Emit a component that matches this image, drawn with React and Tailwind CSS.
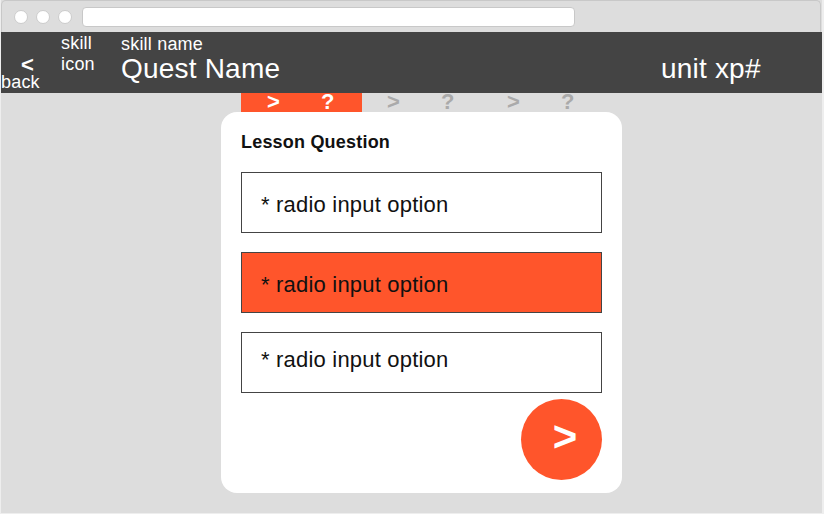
const tabs = [
  { id: 1, active: true },
  { id: 2, active: false },
  { id: 3, active: false },
];

const options = [
  { id: 1, style: "bg-white pt-[19px]" },
  { id: 2, style: "bg-[#ff552b] pt-[19px]" },
  { id: 3, style: "bg-white pt-[14px]" },
];

function BrowserBar() {
  return (
    <div className="mr-px flex h-8 shrink-0 items-center rounded-t-[5px] border-x border-t border-[#c8c8c8] bg-[#ddd] pt-px pl-3">
      <div className="flex gap-2">
        <span className="size-3.5 rounded-full border border-[#ccc] bg-white" />
        <span className="size-3.5 rounded-full border border-[#ccc] bg-white" />
        <span className="size-3.5 rounded-full border border-[#ccc] bg-white" />
      </div>
      <div className="ml-[10px] h-5 w-[493px] rounded-[4px] border border-[#c8c8c8] bg-white" />
    </div>
  );
}

function Header() {
  return (
    <header className="flex h-[61px] shrink-0 bg-[#444] text-lg text-white">
      <div className="w-[60px] pt-6">
        <div className="pl-5 text-[22px] leading-[18px] font-bold">&lt;</div>
        <div className="leading-4">back</div>
      </div>
      <div className="w-[60px] pt-px leading-[21px]">
        skill
        <br />
        icon
      </div>
      <div className="w-[540px] pt-0.5">
        <div className="leading-5">skill name</div>
        <div className="text-[28px] leading-[30px]">Quest Name</div>
      </div>
      <div className="pt-[22px] text-[28px] leading-[30px]">unit xp#</div>
    </header>
  );
}

function Tab({ active }) {
  return (
    <div
      className={`flex h-[19px] text-[22px] leading-[17px] font-bold ${
        active ? "w-[121px] -mr-px bg-[#ff552b] text-white" : "w-[120px] text-[#aaa]"
      }`}
    >
      <span className="w-[54px] shrink-0 pl-[26px]">&gt;</span>
      <span className="pl-[26px]">?</span>
    </div>
  );
}

export default function App() {
  return (
    <div className="h-[514px] w-[824px] overflow-hidden bg-[#eee] pl-px font-['Liberation_Sans',Arial,sans-serif] tracking-[0.2px] text-[#111]">
      <div className="flex h-[513px] w-[821px] flex-col bg-[#ddd]">
        <BrowserBar />
        <Header />
        <nav className="flex pl-60">
          {tabs.map((t) => (
            <Tab key={t.id} active={t.active} />
          ))}
        </nav>
        <main className="ml-[220px] h-[381px] w-[401px] rounded-[16px] bg-white px-5 pt-5">
          <h1 className="text-lg leading-5 font-bold">Lesson Question</h1>
          <div className="mt-5 flex flex-col gap-[19px]">
            {options.map((o) => (
              <div
                key={o.id}
                className={`h-[61px] border border-[#444] pl-[19px] text-[22px] leading-[25px] ${o.style}`}
              >
                * radio input option
              </div>
            ))}
          </div>
          <button className="mt-1.5 ml-auto block size-[81px] rounded-full bg-[#ff552b] pb-1.5 pl-[7px] text-[42px] leading-none font-bold text-white">
            &gt;
          </button>
        </main>
      </div>
    </div>
  );
}
